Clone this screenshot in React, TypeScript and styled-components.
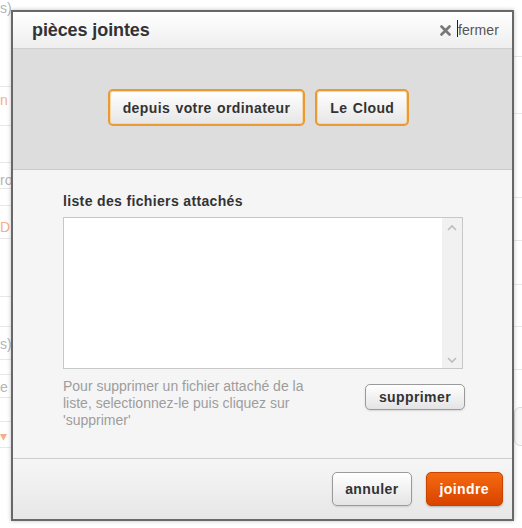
import React from "react";
import styled, { createGlobalStyle } from "styled-components";

const Global = createGlobalStyle`
  html, body { margin: 0; padding: 0; background: #fff; }
  body { width: 522px; height: 528px; overflow: hidden; font-family: "Liberation Sans", Arial, sans-serif; }
`;

const Page = styled.div`
  position: relative;
  width: 522px;
  height: 528px;
  overflow: hidden;
  background: #fff;
`;

const Backdrop = styled.div`
  position: absolute;
  inset: 0;
`;

const BgLine = styled.div<{ $y: number; $side: "l" | "r" }>`
  position: absolute;
  top: ${(p) => p.$y}px;
  ${(p) => (p.$side === "l" ? "left: 0; width: 40px;" : "right: 0; width: 40px;")}
  height: 1px;
  background: #e8e8e8;
`;

const BgText = styled.span<{ $y: number; $orange?: boolean }>`
  position: absolute;
  top: ${(p) => p.$y}px;
  left: 0;
  font-size: 14px;
  line-height: 16px;
  color: ${(p) => (p.$orange ? "#f4b08a" : "#b5b5b5")};
`;

const BgButton = styled.div`
  position: absolute;
  top: 407px;
  left: 514px;
  width: 30px;
  height: 37px;
  border: 1px solid #ddd;
  border-radius: 6px;
  background: #f8f8f8;
`;

const Modal = styled.div`
  position: absolute;
  left: 11px;
  top: 10px;
  width: 499px;
  height: 507px;
  border: 2px solid #686868;
  display: flex;
  flex-direction: column;
  background: #f5f5f5;
  box-shadow: 0 0 4px rgba(0, 0, 0, 0.25);
`;

const Header = styled.div`
  height: 36px;
  flex: none;
  display: flex;
  align-items: center;
  justify-content: space-between;
  padding: 0 13px 0 19px;
  background: linear-gradient(#ffffff, #eeeeee);
  border-bottom: 1px solid #cfcfcf;
`;

const Title = styled.h1`
  margin: 0;
  font-size: 18px;
  font-weight: bold;
  color: #333;
  letter-spacing: -0.1px;
`;

const Close = styled.div`
  display: flex;
  align-items: center;
  gap: 7px;
  font-size: 14px;
  color: #555;
  letter-spacing: 0.1px;
`;

const Cursor = styled.span`
  position: relative;
  &::before {
    content: "";
    position: absolute;
    left: -1px;
    top: -2px;
    width: 1px;
    height: 17px;
    background: #222;
  }
`;

const SourceBar = styled.div`
  height: 121px;
  flex: none;
  display: flex;
  justify-content: center;
  align-items: flex-start;
  gap: 10px;
  padding: 40px 8px 0 0;
  box-sizing: border-box;
  background: #dddddd;
  border-bottom: 1px solid #c9c9c9;
`;

const Button = styled.button<{ $variant?: "source" | "plain" | "primary"; $h?: number; $px?: number }>`
  height: ${(p) => p.$h ?? 37}px;
  padding: 0 ${(p) => p.$px ?? 12}px;
  font-family: "Liberation Sans", Arial, sans-serif;
  font-weight: bold;
  font-size: 14px;
  letter-spacing: 0.4px;
  word-spacing: 1px;
  border-radius: 5px;
  cursor: pointer;
  box-sizing: border-box;
  ${(p) =>
    p.$variant === "source"
      ? `
    color: #333;
    border: 2px solid #e99a34;
    background: linear-gradient(#ffffff, #e6e6e6);
    box-shadow: inset 0 0 0 1px #f6d7a8;
  `
      : p.$variant === "primary"
      ? `
    color: #fff;
    border: 1px solid #c94200;
    background: linear-gradient(#f46a10, #d94300);
    box-shadow: 0 1px 2px rgba(0,0,0,0.25);
  `
      : `
    color: #333;
    border: 1px solid #9a9a9a;
    background: linear-gradient(#ffffff, #e4e4e4);
    box-shadow: 0 1px 2px rgba(0,0,0,0.12);
  `}
`;

const Body = styled.div`
  flex: 1;
  padding: 23px 0 0 50px;
  background: #f5f5f5;
  border-bottom: 1px solid #cccccc;
`;

const Label = styled.div`
  font-size: 14px;
  font-weight: bold;
  color: #333;
  line-height: 17px;
  letter-spacing: 0.35px;
  margin-bottom: 7px;
`;

const ListBox = styled.div`
  width: 400px;
  height: 152px;
  box-sizing: border-box;
  border: 1px solid #c8c8c8;
  background: #fff;
  display: flex;
  justify-content: flex-end;
`;

const Scrollbar = styled.div`
  width: 20px;
  background: #f1f1f1;
  display: flex;
  flex-direction: column;
  justify-content: space-between;
  align-items: center;
  padding: 6px 0 4px;
  box-sizing: border-box;
`;

const HelpRow = styled.div`
  display: flex;
  justify-content: space-between;
  align-items: flex-start;
  width: 402px;
  margin-top: 9px;
`;

const Help = styled.p`
  margin: 0;
  width: 252px;
  font-size: 14px;
  line-height: 17px;
  color: #9d9d9d;
`;

const Footer = styled.div`
  height: 60px;
  flex: none;
  display: flex;
  justify-content: flex-end;
  align-items: center;
  gap: 14px;
  padding: 0 9px 0 0;
  background: linear-gradient(#f6f6f6, #e7e7e7);
`;

const Chevron = ({ up }: { up?: boolean }) => (
  <svg width="10" height="7" viewBox="0 0 10 7">
    <path
      d={up ? "M1 6 L5 2 L9 6" : "M1 1 L5 5 L9 1"}
      fill="none"
      stroke="#bdbdbd"
      strokeWidth="1.6"
    />
  </svg>
);

const XIcon = () => (
  <svg width="11" height="11" viewBox="0 0 11 11">
    <path d="M1.5 1.5 L9.5 9.5 M9.5 1.5 L1.5 9.5" stroke="#777" strokeWidth="2.6" strokeLinecap="round" />
  </svg>
);

export default function App() {
  const leftLines = [86, 125, 162, 188, 205, 238, 296, 326, 359, 374, 397, 421, 447];
  const rightLines = [56, 113, 197, 240, 284, 326, 369, 416];
  return (
    <Page>
      <Global />
      <Backdrop>
        {leftLines.map((y) => (
          <BgLine key={"l" + y} $y={y} $side="l" />
        ))}
        {rightLines.map((y) => (
          <BgLine key={"r" + y} $y={y} $side="r" />
        ))}
        <BgText $y={0}>s)</BgText>
        <BgText $y={92} $orange>n</BgText>
        <BgText $y={172}>ro</BgText>
        <BgText $y={219} $orange>D</BgText>
        <BgText $y={336}>s)</BgText>
        <BgText $y={379}>e</BgText>
        <BgText $y={428} $orange>▾</BgText>
        <BgButton />
      </Backdrop>
      <Modal>
        <Header>
          <Title>pièces jointes</Title>
          <Close>
            <XIcon />
            <Cursor>fermer</Cursor>
          </Close>
        </Header>
        <SourceBar>
          <Button $variant="source" $px={13}>depuis votre ordinateur</Button>
          <Button $variant="source" $px={13}>Le Cloud</Button>
        </SourceBar>
        <Body>
          <Label>liste des fichiers attachés</Label>
          <ListBox>
            <Scrollbar>
              <Chevron up />
              <Chevron />
            </Scrollbar>
          </ListBox>
          <HelpRow>
            <Help>
              Pour supprimer un fichier attaché de la liste, selectionnez-le puis cliquez sur
              'supprimer'
            </Help>
            <Button $variant="plain" $h={26} $px={13} style={{ marginTop: 6 }}>
              supprimer
            </Button>
          </HelpRow>
        </Body>
        <Footer>
          <Button $variant="plain" $h={34} $px={12}>annuler</Button>
          <Button $variant="primary" $h={34} $px={13}>joindre</Button>
        </Footer>
      </Modal>
    </Page>
  );
}
